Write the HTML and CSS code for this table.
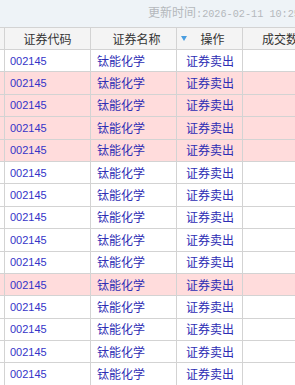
FILE: index.html
```html
<!DOCTYPE html>
<html lang="zh">
<head>
<meta charset="utf-8">
<link rel="stylesheet" href="styles.css">
</head>
<body>
<div class="topbar"><span class="upd">更新时间<span class="mono">:2026-02-11 10:25:36</span></span></div>
<div class="grid">
  <div class="row head">
    <div class="c c0"></div>
    <div class="c c1 center">证券代码</div>
    <div class="c c2 center">证券名称</div>
    <div class="c c3 center"><span class="tri"></span>操作</div>
    <div class="c c4 hd4">成交数量</div>
  </div>
  <div class="row"><div class="c c0"></div><div class="c c1 code">002145</div><div class="c c2">钛能化学</div><div class="c c3 op">证券卖出</div><div class="c c4"></div></div>
  <div class="row pink"><div class="c c0"></div><div class="c c1 code">002145</div><div class="c c2">钛能化学</div><div class="c c3 op">证券卖出</div><div class="c c4"></div></div>
  <div class="row pink"><div class="c c0"></div><div class="c c1 code">002145</div><div class="c c2">钛能化学</div><div class="c c3 op">证券卖出</div><div class="c c4"></div></div>
  <div class="row pink"><div class="c c0"></div><div class="c c1 code">002145</div><div class="c c2">钛能化学</div><div class="c c3 op">证券卖出</div><div class="c c4"></div></div>
  <div class="row pink"><div class="c c0"></div><div class="c c1 code">002145</div><div class="c c2">钛能化学</div><div class="c c3 op">证券卖出</div><div class="c c4"></div></div>
  <div class="row"><div class="c c0"></div><div class="c c1 code">002145</div><div class="c c2">钛能化学</div><div class="c c3 op">证券卖出</div><div class="c c4"></div></div>
  <div class="row"><div class="c c0"></div><div class="c c1 code">002145</div><div class="c c2">钛能化学</div><div class="c c3 op">证券卖出</div><div class="c c4"></div></div>
  <div class="row"><div class="c c0"></div><div class="c c1 code">002145</div><div class="c c2">钛能化学</div><div class="c c3 op">证券卖出</div><div class="c c4"></div></div>
  <div class="row"><div class="c c0"></div><div class="c c1 code">002145</div><div class="c c2">钛能化学</div><div class="c c3 op">证券卖出</div><div class="c c4"></div></div>
  <div class="row"><div class="c c0"></div><div class="c c1 code">002145</div><div class="c c2">钛能化学</div><div class="c c3 op">证券卖出</div><div class="c c4"></div></div>
  <div class="row pink"><div class="c c0"></div><div class="c c1 code">002145</div><div class="c c2">钛能化学</div><div class="c c3 op">证券卖出</div><div class="c c4"></div></div>
  <div class="row"><div class="c c0"></div><div class="c c1 code">002145</div><div class="c c2">钛能化学</div><div class="c c3 op">证券卖出</div><div class="c c4"></div></div>
  <div class="row"><div class="c c0"></div><div class="c c1 code">002145</div><div class="c c2">钛能化学</div><div class="c c3 op">证券卖出</div><div class="c c4"></div></div>
  <div class="row"><div class="c c0"></div><div class="c c1 code">002145</div><div class="c c2">钛能化学</div><div class="c c3 op">证券卖出</div><div class="c c4"></div></div>
  <div class="row"><div class="c c0"></div><div class="c c1 code">002145</div><div class="c c2">钛能化学</div><div class="c c3 op">证券卖出</div><div class="c c4"></div></div>
</div>
</body>
</html>
```
FILE: styles.css
```css
html, body {
  margin: 0;
  padding: 0;
  background: #ffffff;
  overflow: hidden;
}
body {
  width: 295px;
  height: 385px;
  font-family: "Noto Sans CJK SC", "Liberation Sans", sans-serif;
  font-size: 12px;
}
.topbar {
  height: 27px;
  background: #eef3f7;
  display: flex;
  align-items: center;
  padding-left: 148px;
  white-space: nowrap;
  overflow: hidden;
  box-sizing: border-box;
}
.upd {
  color: #b4b8bc;
  font-size: 12px;
  line-height: 14px;
}
.mono {
  font-family: "Liberation Mono", "DejaVu Sans Mono", monospace;
  font-size: 10.2px;
}
.grid {
  border-top: 1px solid #d3d3d3;
}
.row {
  display: grid;
  grid-template-columns: 5px 86px 86px 66px 80px;
  height: 22.4px;
  box-sizing: border-box;
  border-bottom: 1px solid #d3d3d3;
  background: #ffffff;
  white-space: nowrap;
}
.row.head {
  height: 22px;
  background: #f4f4f4;
  color: #333333;
  font-size: 12px;
}
.row.pink {
  background: #ffdcdc;
}
.c {
  border-right: 1px solid #d3d3d3;
  display: flex;
  align-items: center;
  overflow: hidden;
  color: #2d2db4;
  line-height: 14px;
}
.head .c {
  color: #333333;
}
.center {
  justify-content: center;
}
.c3.center {
  position: relative;
  padding-left: 6px;
}
.tri {
  position: absolute;
  left: 4px;
  top: 8px;
  width: 0;
  height: 0;
  border-left: 3.5px solid transparent;
  border-right: 3.5px solid transparent;
  border-top: 5px solid #4a9ee0;
}
.code {
  font-family: "Liberation Sans", sans-serif;
  font-size: 11px;
  padding-left: 5px;
  color: #3434c8;
}
.c2 {
  padding-left: 6px;
}
.op {
  padding-left: 9px;
}
.hd4 {
  padding-left: 19px;
}
```
